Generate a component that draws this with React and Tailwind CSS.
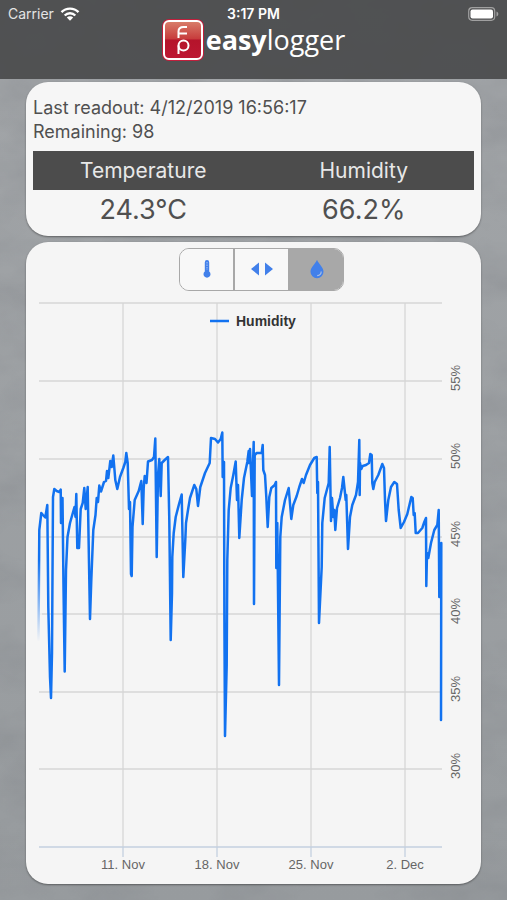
import { useState } from "react";

const humidity = `38.5,640 39.3,530 41.3,513 43,515 45.3,517.5 47.3,505 48.3,607 50,677 51,698 52,653 53,497 54.3,489 56.7,491 59.3,492
60.7,489.5 61,523 62.5,498 63.5,587 64.7,671.5 66,570 67.5,537 70,523 74.5,507 75.5,517 76.3,494 77.3,548 79,548 80.7,509 82.7,503
84.3,488 85.7,509 87.7,487 89,563 90,619 91.3,580 93.3,530 95.5,515 96.7,498 98,502 99.3,485.5 101,491.5 104,482 106,481 107,471
108.3,478 110.3,461 111.7,467 113.3,455.5 115.3,480 117.3,489 120,477 123.3,468 125.3,462 126.3,453 127.7,463 129,509 130,502
131,574 131.7,576 132.5,527 134.7,500 138.7,491 141.3,481 142.7,524 143.7,488 144.7,476 146.5,483 148,461.5 152,460 154,457
155.3,438.5 156.7,557 158,475 159.3,459 160.7,496 161.7,463 164.7,460 168,457 169.3,520 170.7,640 172,593 172.3,557 173.7,533
175.7,517 179.3,503 181.7,494.5 183.3,577 185.3,540 186,523 188,510 190,498 194.3,485 196.3,489 198,506 200.3,487 205,473
209.7,463 211,438 215,439 218,442.5 220.7,439 222.3,432.5 222.7,477 224,462 224.4,620 225,736 226.7,665 227.3,560 228.7,510
230.7,488 233.3,475 235.7,461.5 237,500 238,485 239.3,538 241.7,500 244,478 247.3,462 248.7,451 249,463 250,449 252,496 253.7,442
254,604 254.7,455 256.7,453 261.7,453 262.7,445 263.3,470 265,475 266.3,497 267.7,527 269.3,497 271.3,488 274.7,485 276,482
276.3,568 277.3,523 279,685 280.3,537 281.7,517 285,500 288.7,488 291.3,519 293.3,505 296.7,496 299.3,487 302,479 303.7,483
306,475 310,465 314.3,458 316.7,457 317.3,493 318,482 319,623 321.7,567 322.3,523 324.7,498 328.7,483 329.7,447 331,521 332,498
333.3,517 334.3,510 335.3,530 337,508 340,498 342,488 343.3,477 345.7,500 346.3,495 348,549 350,517 352.3,505 356,495 358,482
359.3,440 359.7,495 360,463 361.3,469 362.7,466 366,465 369,463 370.3,454 371.7,455 372.3,483 373.3,489 374.7,482 378.3,475
382.3,464 384,468 385,500 386,521 388.3,500 391,487 394.3,482 397,484 398.7,510 400.7,528 404,522 407.3,514 411.3,497 412.7,498
413.7,515 414.7,513 415.7,533 418,533 422.3,528 424.3,522 426,518 426.3,586 427,553 428.3,558 431,543 434.3,530 437.3,525
438.7,510 439.3,597 441.3,543 441,720`;

const levels = [
  { y: 303 },
  { y: 381, label: "55%" },
  { y: 459, label: "50%" },
  { y: 537, label: "45%" },
  { y: 614, label: "40%" },
  { y: 692, label: "35%" },
  { y: 769, label: "30%" },
];

const weeks = [
  { x: 123, label: "11. Nov" },
  { x: 217, label: "18. Nov" },
  { x: 311, label: "25. Nov" },
  { x: 405, label: "2. Dec" },
];

function Concrete() {
  return (
    <svg className="absolute inset-0 h-full w-full" aria-hidden="true">
      <filter id="concrete" x="0" y="0" width="100%" height="100%">
        <feTurbulence type="fractalNoise" baseFrequency="0.015 0.025" numOctaves="4" seed="7" />
        <feColorMatrix values="0 0 0 0 0.18  0 0 0 0 0.19  0 0 0 0 0.21  0.9 0 0 0 -0.33" />
      </filter>
      <rect width="100%" height="100%" filter="url(#concrete)" opacity="0.5" />
    </svg>
  );
}

function Logo() {
  return (
    <svg className="h-[42px] w-[42px]" viewBox="0 0 42 42" aria-hidden="true">
      <defs>
        <linearGradient id="badge" x1="0" y1="0" x2="0" y2="1">
          <stop offset="0" stopColor="#d9806c" />
          <stop offset="0.47" stopColor="#c73c3c" />
          <stop offset="0.5" stopColor="#b5142b" />
          <stop offset="1" stopColor="#bd1733" />
        </linearGradient>
      </defs>
      <rect width="42" height="42" rx="7" fill="#c01f3c" />
      <rect x="2" y="2" width="38" height="38" rx="5" fill="url(#badge)" stroke="#fff" strokeWidth="2" />
      <g fill="none" stroke="#fff" strokeWidth="2">
        <path d="M25 8h-3.500q-5 0-5 4.500V19M16.500 14.500H25" />
        <path d="M16.500 35V26.500" />
        <circle cx="21.500" cy="26.500" r="5" />
      </g>
    </svg>
  );
}

function Thermometer() {
  return (
    <svg className="h-5 w-5" viewBox="0 0 20 20" aria-hidden="true">
      <path d="M7.800 3.200a2.200 2.200 0 0 1 4.400 0v9.300a3.500 3.500 0 1 1-4.400 0z" fill="#4280ea" />
      <path d="M10 3v8" stroke="#a9c6f6" strokeWidth="1" strokeDasharray="1.500 1" />
    </svg>
  );
}

function Arrows() {
  return (
    <svg className="h-5 w-6" viewBox="0 0 24 20" aria-hidden="true">
      <path d="M9 3.500v13L1 10zM15 3.500v13l8-6.500z" fill="#4280ea" />
    </svg>
  );
}

function Drop() {
  return (
    <svg className="h-5 w-5" viewBox="0 0 20 20" aria-hidden="true">
      <path d="M10 .8c1.300 3.700 6.500 7.400 6.500 11.900a6.500 6.500 0 0 1-13 0C3.500 8.200 8.700 4.500 10 .8z" fill="#4280ea" />
      <path d="M14.200 12.500c0 2.300-1.500 3.900-4 4.200" fill="none" stroke="#a9bfe4" strokeWidth="1.200" />
    </svg>
  );
}

function Chart() {
  return (
    <svg className="block w-full" viewBox="26 291 455 593" role="img" aria-label="Humidity over time">
      <defs>
        <linearGradient id="fade" gradientUnits="userSpaceOnUse" x1="0" y1="560" x2="0" y2="642">
          <stop offset="0" stopColor="#f5f5f5" stopOpacity="0" />
          <stop offset="1" stopColor="#f5f5f5" />
        </linearGradient>
      </defs>
      <g stroke="#d6d6d6" strokeWidth="1.300">
        {levels.map(({ y }) => (
          <path key={y} d={`M39 ${y}H442`} />
        ))}
        {weeks.map(({ x }) => (
          <path key={x} d={`M${x} 303V847`} />
        ))}
      </g>
      <g stroke="#c3cfdf" strokeWidth="1.300">
        <path d="M39 847H442" />
        {weeks.map(({ x }) => (
          <path key={x} d={`M${x} 847V857`} />
        ))}
      </g>
      <polyline points={humidity} fill="none" stroke="#1272f0" strokeWidth="2.500" strokeLinejoin="round" strokeLinecap="round" />
      <rect x="36" y="550" width="6" height="95" fill="url(#fade)" />
      <path d="M210 321H229" stroke="#1272f0" strokeWidth="2.500" />
      <g className="font-['Liberation_Sans',Arial,sans-serif]">
        <text x="236" y="326" className="text-[14px] font-bold" fill="#333">
          Humidity
        </text>
        <g className="text-[13px]" fill="#666" textAnchor="middle">
          {levels.map(
            ({ y, label }) =>
              label && (
                <text key={label} transform={`translate(460 ${y - 3}) rotate(-90)`}>
                  {label}
                </text>
              )
          )}
          {weeks.map(({ x, label }) => (
            <text key={label} x={x} y="869">
              {label}
            </text>
          ))}
        </g>
      </g>
    </svg>
  );
}

const modes = [
  { id: "temperature", label: "Temperature", Icon: Thermometer },
  { id: "both", label: "Temperature and humidity", Icon: Arrows },
  { id: "humidity", label: "Humidity", Icon: Drop },
];

export default function App() {
  const [mode, setMode] = useState("humidity");

  return (
    <div className="relative min-h-screen bg-linear-to-b from-[#a2a5a8] to-[#979b9e] font-[Inter,sans-serif] text-[#505050]">
      <Concrete />
      <div className="relative">
        <header className="h-[79px] bg-[#4c4d4e]/95 text-white">
          <div className="grid h-[21px] grid-cols-3 items-end px-2 text-[14px] leading-[14px]">
            <div className="flex items-center gap-1.5 text-[#e4e4e4]">
              <span>Carrier</span>
              <svg className="h-[14px] w-5" viewBox="0 0 20 14" aria-hidden="true">
                <g fill="none" stroke="#fff" strokeWidth="2.400">
                  <path d="M1.500 5.200a12 12 0 0 1 17 0" />
                  <path d="M4.700 8.500a7.500 7.500 0 0 1 10.600 0" />
                </g>
                <path d="M10 13.800l-3.200-3.300a4.600 4.600 0 0 1 6.400 0z" fill="#fff" />
              </svg>
            </div>
            <div className="text-center font-semibold">3:17 PM</div>
            <svg className="h-[14px] w-[31px] justify-self-end" viewBox="0 0 31 14" aria-hidden="true">
              <rect x=".7" y=".7" width="26" height="12.600" rx="3.500" fill="none" stroke="#a0a0a0" strokeWidth="1.200" />
              <rect x="2.500" y="2.500" width="22.500" height="9" rx="2" fill="#fff" />
              <path d="M28.500 4.500c2.400.8 2.400 4.200 0 5z" fill="#a0a0a0" />
            </svg>
          </div>
          <h1 className="-mt-0.5 flex items-center justify-center font-['Open_Sans','Noto_Sans',sans-serif] text-[27px] leading-[42px]">
            <Logo />
            <span className="pl-0.5 font-bold">easy</span>
            <span className="font-normal">logger</span>
          </h1>
        </header>

        <main className="flex flex-col gap-1.5 px-[26px] pt-[3px] pb-4">
          <section className="rounded-[22px] bg-[#f6f6f6] px-[7px] pt-3.5 pb-1.5 shadow-[0_1px_2px_rgba(0,0,0,0.4)]">
            <p className="text-[18px] leading-6">Last readout: 4/12/2019 16:56:17</p>
            <p className="text-[18px] leading-6">Remaining: 98</p>
            <table className="mt-[7px] w-full table-fixed text-center">
              <thead>
                <tr className="h-[39px] bg-[#4c4c4c] text-[21px] leading-7 text-[#e8e8e8]">
                  <th className="p-0 font-normal">Temperature</th>
                  <th className="p-0 font-normal">Humidity</th>
                </tr>
              </thead>
              <tbody>
                <tr className="h-10 text-[27px] leading-9">
                  <td className="p-0">24.3°C</td>
                  <td className="p-0">66.2%</td>
                </tr>
              </tbody>
            </table>
          </section>

          <section className="rounded-[22px] bg-[#f5f5f5] pt-1.5 shadow-[0_1px_2px_rgba(0,0,0,0.4)]">
            <div className="flex justify-center pl-4">
              <div className="flex h-[43px] w-[165px] divide-x-2 divide-[#a8a8a8] overflow-hidden rounded-[10px] border border-[#a8a8a8]">
                {modes.map(({ id, label, Icon }) => (
                  <button
                    key={id}
                    type="button"
                    aria-label={label}
                    aria-pressed={mode === id}
                    onClick={() => setMode(id)}
                    className={`flex flex-1 items-center justify-center pb-0.5 ${mode === id ? "bg-[#a8a8a8]" : "bg-[#f8f8f8]"}`}
                  >
                    <Icon />
                  </button>
                ))}
              </div>
            </div>
            <Chart />
          </section>
        </main>
      </div>
    </div>
  );
}
